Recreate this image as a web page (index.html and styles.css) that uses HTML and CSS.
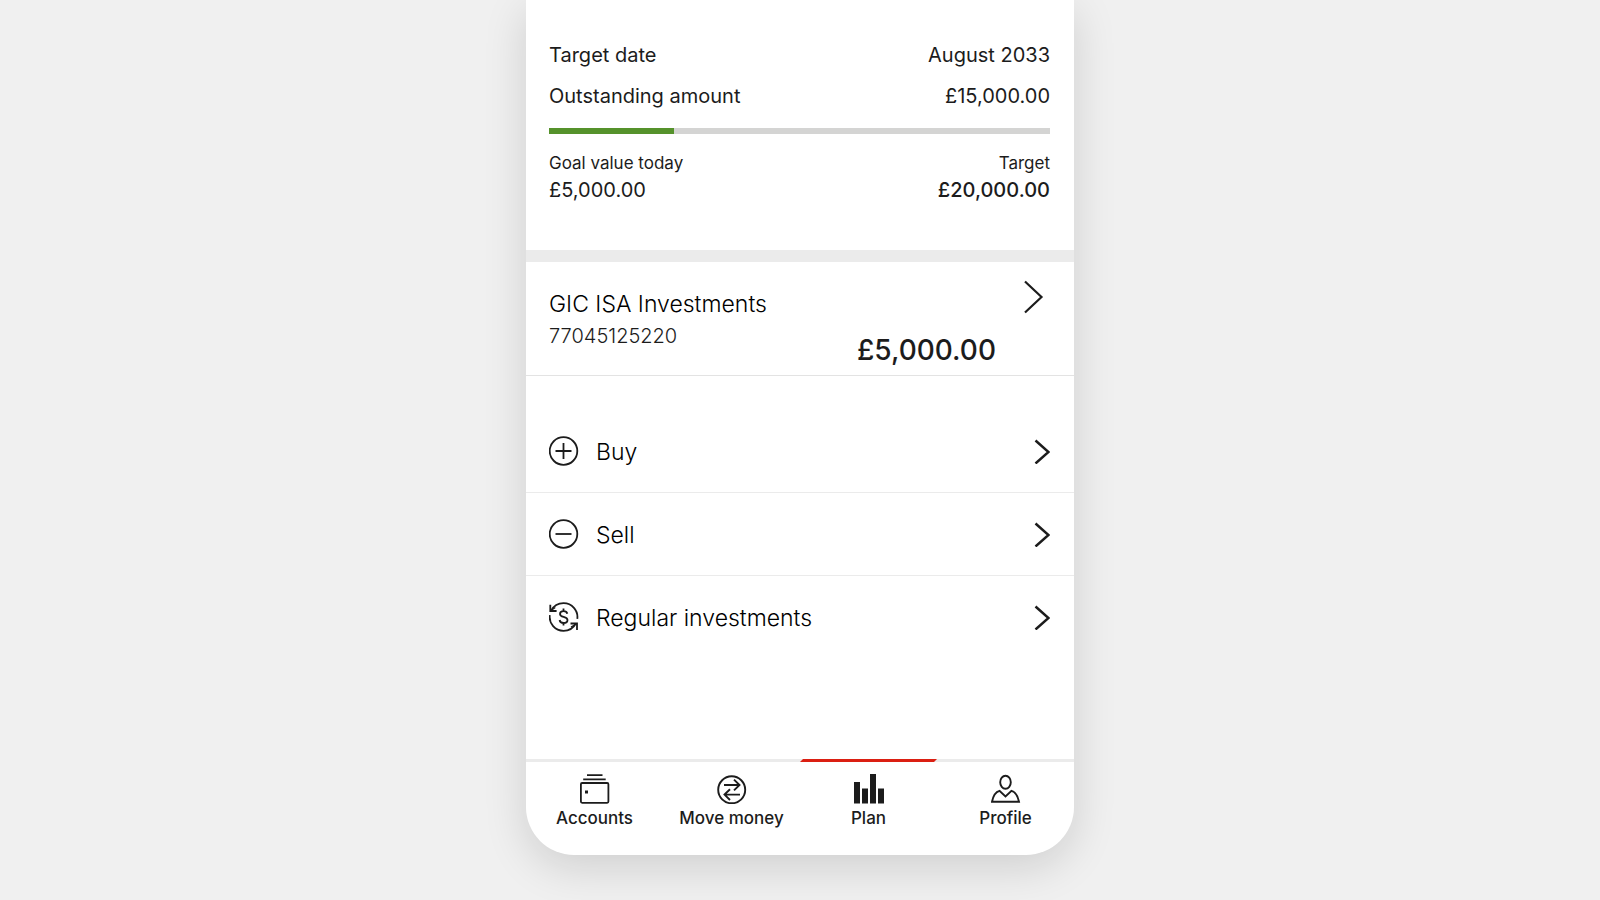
FILE: index.html
```html
<!DOCTYPE html>
<html lang="en">
<head>
<meta charset="utf-8">
<meta name="viewport" content="width=device-width, initial-scale=1">
<title>Investment goal</title>
<link rel="stylesheet" href="styles.css">
</head>
<body>
<div class="phone">
  <main>
    <section class="goal">
      <dl class="facts">
        <div class="fact"><dt>Target date</dt><dd>August 2033</dd></div>
        <div class="fact"><dt>Outstanding amount</dt><dd>£15,000.00</dd></div>
      </dl>
      <div class="progress" role="progressbar" aria-label="Goal progress" aria-valuemin="0" aria-valuemax="100" aria-valuenow="25">
        <div class="progress-fill" style="width: 25%"></div>
      </div>
      <div class="values">
        <div class="value"><span class="value-label">Goal value today</span><span>£5,000.00</span></div>
        <div class="value value-end"><span class="value-label">Target</span><span class="value-strong">£20,000.00</span></div>
      </div>
    </section>

    <a class="account" href="#account">
      <span class="account-info">
        <span class="account-name">GIC ISA Investments</span>
        <span class="account-number">77045125220</span>
      </span>
      <span class="account-amount">£5,000.00</span>
      <svg class="account-chevron" width="20" height="34" viewBox="0 0 20 34" fill="none" stroke="currentColor" stroke-width="2.200"><path d="M1 1.500 17.500 17 1 32.500"/></svg>
    </a>

    <ul class="actions">
      <li><a class="action" href="#buy">
        <svg width="30" height="30" viewBox="0 0 30 30" fill="none" stroke="currentColor" stroke-width="1.800"><circle cx="14.500" cy="15" r="13.800"/><path d="M14.500 7v16M6.500 15h16"/></svg>
        <span class="action-label">Buy</span>
        <svg width="16" height="26" viewBox="0 0 16 26" fill="none" stroke="currentColor" stroke-width="2.500"><path d="M1.500 2.500 14.500 14 1.500 25.500"/></svg>
      </a></li>
      <li><a class="action" href="#sell">
        <svg width="30" height="30" viewBox="0 0 30 30" fill="none" stroke="currentColor" stroke-width="1.800"><circle cx="14.500" cy="15" r="13.800"/><path d="M6.500 15h16"/></svg>
        <span class="action-label">Sell</span>
        <svg width="16" height="26" viewBox="0 0 16 26" fill="none" stroke="currentColor" stroke-width="2.500"><path d="M1.500 2.500 14.500 14 1.500 25.500"/></svg>
      </a></li>
      <li><a class="action" href="#regular">
        <svg width="30" height="30" viewBox="0 0 30 30" fill="none" stroke="currentColor" stroke-width="1.800"><path d="M2 8.800C4.500 4.300 9 1.200 14.500 1.200A13.800 13.800 0 0 1 28.300 16.800M26.800 21.500C24.500 25.800 20 28.800 14.500 28.800A13.800 13.800 0 0 1 .8 13.200"/><path d="M1.300 2.800v6.200h6.300M21.500 21.500h6.500v6.500"/><path d="M28 21.500l-6 3.500M1.300 9l5-3.500" stroke-width="1.200"/><path d="M18.300 11.700c-.4-1.700-1.700-2.600-3.700-2.600-2.100 0-3.600 1-3.600 2.800 0 1.800 1.500 2.400 3.600 2.900 2.300.6 3.900 1.300 3.900 3.200 0 1.900-1.600 3-3.900 3-2.200 0-3.700-1.100-4-3M14.500 6.600v2.600M14.500 20.900v2.600"/></svg>
        <span class="action-label">Regular investments</span>
        <svg width="16" height="26" viewBox="0 0 16 26" fill="none" stroke="currentColor" stroke-width="2.500"><path d="M1.500 2.500 14.500 14 1.500 25.500"/></svg>
      </a></li>
    </ul>
  </main>

  <nav class="tabs" aria-label="Main">
    <a class="tab" href="#accounts">
      <svg width="30" height="30" viewBox="0 0 30 30" fill="none" stroke="currentColor" stroke-width="1.800"><path d="M7 1.200h15.500M3.200 5.400h22.500"/><rect x=".9" y="9" width="27.500" height="19.800" rx="1.200"/><path d="M5 18h3" stroke-width="3"/></svg>
      Accounts
    </a>
    <a class="tab" href="#move">
      <svg width="30" height="30" viewBox="0 0 30 30" fill="none" stroke="currentColor" stroke-width="1.900"><circle cx="14.700" cy="15.800" r="13.500"/><path d="M7 11h15.500M17 5.600l5.500 5.400-5.500 5.400M23 20.600H7.500M13 15.200l-5.500 5.400 5.500 5.400"/></svg>
      Move money
    </a>
    <a class="tab tab-active" href="#plan" aria-current="page">
      <svg width="30" height="30" viewBox="0 0 30 30" fill="currentColor"><path d="M0 8h6v21.500H0zM8 14.500h6v15H8zM16 0h6v29.500h-6zM24 14.500h6v15h-6z"/></svg>
      Plan
    </a>
    <a class="tab" href="#profile">
      <svg width="30" height="30" viewBox="0 0 30 30" fill="none" stroke="currentColor" stroke-width="1.900"><ellipse cx="14.500" cy="8.200" rx="5.300" ry="6.500"/><path d="M8.500 16.800C4.700 17.800 2 22.500 1 27.800h27C26.900 22.500 24.200 17.800 20.500 16.800l-6 5.600z"/></svg>
      Profile
    </a>
  </nav>
</div>
</body>
</html>
```

FILE: styles.css
```css
* {
  box-sizing: border-box;
}

body {
  margin: 0;
  background: #f0f0f0;
  color: #1c1c1c;
  font-family: Inter, "Liberation Sans", sans-serif;
  font-size: 20px;
  line-height: 24px;
}

a {
  color: inherit;
  text-decoration: none;
}

svg {
  display: block;
  flex: none;
}

.phone {
  max-width: 548px;
  margin: 0 auto 45px;
  background: #fff;
  border-radius: 0 0 48px 48px;
  box-shadow: 0 12px 44px rgba(0, 0, 0, 0.14);
}

.goal {
  padding: 43px 24px 48px 23px;
  border-bottom: 12px solid #ebebeb;
}

.facts {
  display: grid;
  gap: 17px;
  margin: 0 0 20px;
}

.fact,
.values {
  display: flex;
  justify-content: space-between;
}

.fact dd {
  margin: 0;
}

.progress {
  height: 6px;
  margin-bottom: 17px;
  background: #d4d4d3;
}

.progress-fill {
  height: 100%;
  background: #55922b;
}

.value {
  display: grid;
  gap: 3px;
}

.value-end {
  text-align: right;
}

.value-label {
  font-size: 17px;
}

.value-strong {
  font-weight: 500;
}

.account {
  display: flex;
  padding: 18px 30px 10px 23px;
  border-bottom: 1px solid #e3e3e3;
}

.account-info {
  display: grid;
  flex: 1;
  align-content: start;
  gap: 8px;
  padding-top: 12px;
}

.account-name {
  color: #000;
  font-size: 23px;
  font-weight: 300;
}

.account-number {
  font-weight: 300;
}

.account-amount {
  padding-top: 55px;
  font-size: 28px;
  font-weight: 500;
  line-height: 30px;
}

.account-chevron {
  margin-left: 28px;
}

.actions {
  margin: 0;
  padding: 34px 0 101px;
  list-style: none;
}

.actions li + li {
  border-top: 1px solid #ebebeb;
}

.action {
  display: flex;
  align-items: center;
  gap: 17px;
  padding: 26px 24px 26px 23px;
}

.action-label {
  flex: 1;
  padding-top: 2px;
  color: #000;
  font-size: 23px;
  font-weight: 300;
  line-height: 28px;
}

.tabs {
  display: grid;
  grid-template-columns: repeat(4, 1fr);
  border-top: 3px solid #ebebeb;
}

.tab {
  position: relative;
  display: grid;
  justify-items: center;
  gap: 2px;
  padding: 12px 0 25px;
  font-size: 17px;
  font-weight: 500;
}

.tab-active::before {
  content: "";
  position: absolute;
  top: -3px;
  left: 0;
  right: 0;
  height: 3px;
  background: #db1f12;
  clip-path: polygon(3px 0, 100% 0, calc(100% - 3px) 100%, 0 100%);
}
```
